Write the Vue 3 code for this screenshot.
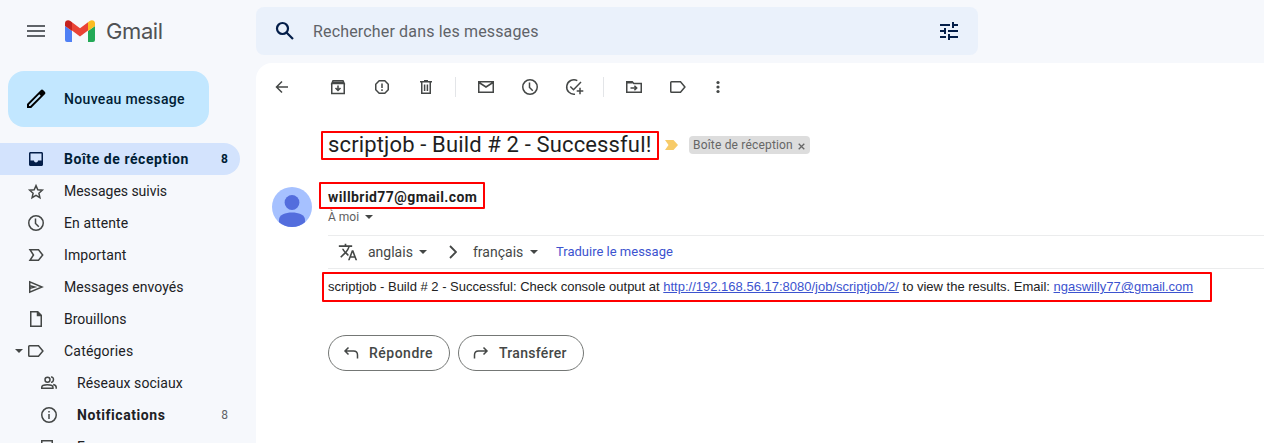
<script setup>
const icons = {
  inbox: 'M4.5 3h11c.9 0 1.5.6 1.5 1.5v11c0 .9-.6 1.5-1.5 1.5h-11c-.9 0-1.5-.6-1.5-1.5v-11C3 3.600 3.600 3 4.500 3zM4.500 4.500v7H8c0 1.100.9 2 2 2s2-.9 2-2h3.500v-7z',
  star: 'M10 4.600l1.800 4.200 4.500.4-3.400 3 1 4.400-3.900-2.300-3.900 2.300 1-4.400-3.400-3 4.500-.4z',
  clock: 'M10 2.750a7.250 7.250 0 1 0 0 14.500a7.250 7.250 0 1 0 0-14.500zM9.500 5.500v5l3.300 3.300',
  important: 'M4 4.750h8.500L16.700 10l-4.200 5.250H4L7.500 10z',
  send: 'M3.750 4.800v10.400L16 10zM4 8.800l4.500 1.200L4 11.200',
  draft: 'M4.750 2.750h7l3.500 3.500v11H4.750zM11.500 3v3.500H15M12.500 3.500v2.300h2.300',
  tag: 'M3.500 4.750h9L16.900 10l-4.400 5.250h-9c-.4 0-.75-.3-.75-.75V5.500c0-.4.3-.75.75-.75z',
  people: 'M8.500 4.250a2.500 2.500 0 1 0 0 5a2.500 2.500 0 1 0 0-5zM2.750 15.250v-1c0-3.300 11.200-3.300 11.200 0v1zM12 3.900c3.300-.3 3.300 5.600 0 5.400M14.200 11.500c2 .5 3 1.300 3 2.700v1.600',
  info: 'M10 2.750a7.250 7.250 0 1 0 0 14.500a7.250 7.250 0 1 0 0-14.500zM10 9v5M10 6v1.500',
  forum: 'M2.750 16V3.750h10.500V12M5 12h8',
}
const items = [
  { t: 'Boîte de réception', i: 'inbox', n: '8', c: 'active bold', k: 'w-inbox' },
  { t: 'Messages suivis', i: 'star', k: 'w-star' },
  { t: 'En attente', i: 'clock', k: 'w-wait' },
  { t: 'Important', i: 'important', k: 'w-imp' },
  { t: 'Messages envoyés', i: 'send', k: 'w-sent' },
  { t: 'Brouillons', i: 'draft', k: 'w-draft' },
  { t: 'Catégories', i: 'tag', c: 'category', k: 'w-cat' },
  { t: 'Réseaux sociaux', i: 'people', c: 'sub', k: 'w-social' },
  { t: 'Notifications', i: 'info', n: '8', c: 'sub bold', k: 'w-notif' },
  { t: 'Forums', i: 'forum', c: 'sub', k: 'w-forum' },
]
</script>

<template>
  <div class="page">
    <aside class="side">
      <div class="brand">
        <svg class="menu" viewBox="0 0 24 24"><path d="M3 6h18v2H3zM3 11h18v2H3zM3 16h18v2H3z" /></svg>
        <svg class="logo" viewBox="0 0 30 22">
          <path fill="#4f80f5" d="M0 6l7 5v11H2a2 2 0 0 1-2-2z" />
          <path fill="#23a957" d="M30 6l-7 5v11h5a2 2 0 0 0 2-2z" />
          <path fill="#ea4335" d="M7 2.200l8 6 8-6v8.300l-8 6-8-6z" />
          <path fill="#fbbc22" d="M23 2.200l1.600-1.200C27-.8 30 .5 30 3.200V6l-7 5z" />
          <path fill="#c5221f" d="M7 2.200L5.400 1C3-.8 0 .5 0 3.200V6l7 5z" />
        </svg>
        <span class="brand-name">Gmail</span>
      </div>
      <button class="compose">
        <svg viewBox="0 0 24 24"><path fill-rule="evenodd" d="M3 16.900L15.700 4.200l1-1c.8-.8 1.800-.8 2.600 0l1.500 1.500c.8.8.8 1.800 0 2.600L7.200 21H3zM5 17.800V19h1.300L16.700 8.700 15.300 7.300z" /></svg>
        <span>Nouveau message</span>
      </button>
      <nav>
        <div v-for="it in items" :key="it.t" class="row" :class="it.c">
          <svg v-if="it.i === 'tag'" class="caret" viewBox="0 0 8 4"><path d="M0 0h8L4 4z" /></svg>
          <svg class="ico" :class="it.i" viewBox="0 0 20 20"><path :d="icons[it.i]" /></svg>
          <span class="name" :class="it.k">{{ it.t }}</span>
          <span v-if="it.n" class="count">{{ it.n }}</span>
        </div>
      </nav>
    </aside>

    <div class="content">
      <div class="search">
        <svg class="glass" viewBox="0 0 24 24"><circle cx="9.500" cy="9.500" r="5.500" /><path d="M13.500 13.500l6.500 6.500" /></svg>
        <span class="placeholder">Rechercher dans les messages</span>
        <svg class="tune" viewBox="0 0 24 24"><path d="M3 17v2h6v-2H3zM3 5v2h10V5H3zm10 16v-2h8v-2h-8v-2h-2v6h2zM7 9v2H3v2h4v2h2V9H7zm14 4v-2H11v2h10zm-6-4h2V7h4V5h-4V3h-2v6z" /></svg>
      </div>

      <main>
        <div class="toolbar">
          <svg class="ico back" viewBox="0 0 20 20"><path d="M16 10H4.800M10 4.500L4.500 10l5.500 5.500" /></svg>
          <svg class="ico" viewBox="0 0 20 20"><path d="M3.750 6.500v10h12.500v-10M3.750 6.500L5 3.750h10l1.250 2.750zM4 5.500h12M10 8.500v4.500M7.500 11l2.500 2.500 2.500-2.500" /></svg>
          <svg class="ico" viewBox="0 0 20 20"><path d="M7.200 3.750h5.600l3.450 3.450v5.600l-3.450 3.450H7.200L3.750 12.800V7.200zM10 6.500v4.500M10 12.300v1.600" /></svg>
          <svg class="ico" viewBox="0 0 20 20"><path d="M4 4.750h12M8 3.750h4M5.750 5v11.250h8.500V5M8.600 7.500v6.500M11.400 7.500v6.500" /></svg>
          <i class="sep"></i>
          <svg class="ico" viewBox="0 0 20 20"><path d="M2.750 4.750h14.500v10.500H2.750zM3 5.500l7 4.500 7-4.500" /></svg>
          <svg class="ico" viewBox="0 0 20 20"><path :d="icons.clock" /></svg>
          <svg class="ico plus" viewBox="0 0 20 20"><path d="M13.300 3.600A7.250 7.250 0 1 0 11 17.200M6.300 9.500l3.200 3.200 7.500-7.700M16 10.700v6.600M12.700 14h6.600" /></svg>
          <i class="sep"></i>
          <svg class="ico" viewBox="0 0 20 20"><path d="M2.750 4.750h5.500L9.800 6.500h7.450v8.750H2.750zM3 5.700h5.500M6.500 11h6M10.400 8.700l2.300 2.300-2.300 2.300" /></svg>
          <svg class="ico" viewBox="0 0 20 20"><path :d="icons.tag" /></svg>
          <svg class="ico more" viewBox="0 0 20 20"><circle cx="10" cy="5.500" r="1.600" /><circle cx="10" cy="10" r="1.600" /><circle cx="10" cy="14.500" r="1.600" /></svg>
        </div>

        <div class="subject">
          <h1>scriptjob - Build # 2 - Successful!</h1>
          <svg class="marker" viewBox="0 0 13 10"><path d="M0 0h8.500L13 5l-4.500 5H0l3.500-5z" /></svg>
          <span class="chip"><span class="chip-name">Boîte de réception</span><svg viewBox="0 0 7 7"><path d="M.7.7l5.600 5.600M6.300.7L.7 6.300" /></svg></span>
          <i class="frame frame-subject"></i>
        </div>

        <div class="sender">
          <svg class="avatar" viewBox="0 0 40 40"><circle cx="20" cy="20" r="20" fill="#a6c1ff" /><circle cx="20" cy="15.500" r="7.400" fill="#536ddd" /><path fill="#536ddd" d="M7 35.200v-2.700C7 23 33 23 33 32.500v2.700A20 20 0 0 1 7 35.200z" /></svg>
          <div class="who">
            <div class="mail">willbrid77@gmail.com</div>
            <div class="to"><span>À moi</span><svg class="caret" viewBox="0 0 8 4"><path d="M0 0h8L4 4z" /></svg></div>
          </div>
          <i class="frame frame-sender"></i>
        </div>

        <div class="translate">
          <svg class="lang-icon" viewBox="0 0 24 24"><path d="M12.870 15.070l-2.540-2.510.030-.030A17.520 17.520 0 0 0 14.070 6H17V4h-7V2H8v2H1v2h11.170C11.500 7.920 10.440 9.750 9 11.350 8.070 10.320 7.300 9.190 6.690 8h-2c.73 1.630 1.730 3.170 2.980 4.560l-5.090 5.020L4 19l5-5 3.110 3.110zM18.500 10h-2L12 22h2l1.120-3h4.750L21 22h2zm-2.620 7l1.620-4.330L19.120 17z" /></svg>
          <span class="from">anglais</span><svg class="caret" viewBox="0 0 8 4"><path d="M0 0h8L4 4z" /></svg>
          <svg class="arrow" viewBox="0 0 8 14"><path d="M1 1l6 6-6 6" /></svg>
          <span class="into">français</span><svg class="caret" viewBox="0 0 8 4"><path d="M0 0h8L4 4z" /></svg>
          <a class="go">Traduire le message</a>
        </div>

        <p class="body">scriptjob - Build # 2 - Successful: Check console output at <a>http://192.168.56.17:8080/job/scriptjob/2/</a> to view the results. Email: <a>ngaswilly77@gmail.com</a><i class="frame frame-body"></i></p>

        <div class="actions">
          <button class="reply"><svg viewBox="0 0 20 20"><path d="M7.500 4.500L4 8l3.500 3.500M4.200 8h8.300c2.500 0 4 1.500 4 4v3.500" /></svg><span>Répondre</span></button>
          <button class="forward"><svg viewBox="0 0 20 20"><path d="M12.500 4.500L16 8l-3.500 3.500M15.800 8H7.500c-2.500 0-4 1.500-4 4v3.500" /></svg><span>Transférer</span></button>
        </div>
      </main>
    </div>
  </div>
</template>

<style>
body { margin: 0; overflow: hidden; }
</style>

<style scoped>
* { box-sizing: border-box; }
.page { width: 1264px; height: 443px; display: flex; overflow: hidden; background: #f6f8fc; font-family: Roboto, sans-serif; font-size: 14px; color: #202124; white-space: nowrap; }
svg { display: block; flex: none; }
button { font: inherit; margin: 0; padding: 0; }
.side { width: 256px; height: 443px; overflow: hidden; flex: none; }
.brand { height: 62px; padding-left: 24px; display: flex; align-items: center; }
.menu { width: 24px; height: 24px; fill: #5f6368; }
.logo { width: 30px; height: 22px; margin-left: 17px; }
.brand-name { margin-left: 11px; font-family: Inter, sans-serif; font-size: 22px; line-height: 30px; letter-spacing: -.4px; color: #505254; }
.compose { width: 201px; height: 56px; margin: 9px 0 0 8px; padding-left: 16px; display: flex; align-items: center; border: 0; border-radius: 16px; background: #c2e7ff; color: #001d35; font-weight: 500; letter-spacing: .33px; }
.compose svg { width: 24px; height: 24px; margin-right: 16px; }
nav { margin-top: 16px; }
.row { height: 32px; width: 240px; padding: 0 12px 0 26px; display: flex; align-items: center; border-radius: 0 16px 16px 0; line-height: 20px; }
.active { background: #d3e3fd; color: #001d35; }
.bold { font-weight: 700; }
.category { padding-left: 15px; }
.category .caret { margin-right: 3px; }
.sub { padding-left: 39px; }
.ico { width: 20px; height: 20px; fill: none; stroke: #444746; stroke-width: 1.5; }
.ico.inbox { fill: #041e49; fill-rule: evenodd; stroke: none; }
.name { margin-left: 18px; flex: 1; letter-spacing: .2px; }
.w-inbox { letter-spacing: .56px; }
.w-star { letter-spacing: -.03px; }
.w-wait { letter-spacing: .12px; }
.w-imp { letter-spacing: .1px; }
.w-sent { letter-spacing: .06px; }
.w-draft { letter-spacing: .02px; }
.w-social { letter-spacing: .08px; }
.w-notif { letter-spacing: .57px; }
.count { font-size: 12px; letter-spacing: 0; }
.sub .count { font-weight: 400; color: #5f6368; }
.caret { width: 8px; height: 4px; fill: #444746; }
.content { flex: 1; min-width: 0; padding-top: 7px; }
.search { width: 722px; height: 48px; padding: 0 17px; display: flex; align-items: center; border-radius: 8px; background: #eaf1fb; }
.glass { width: 24px; height: 24px; fill: none; stroke: #041e49; stroke-width: 2.2; }
.placeholder { flex: 1; margin-left: 16px; font-size: 16px; letter-spacing: .16px; color: #5f6368; }
.tune { width: 24px; height: 24px; fill: #041e49; }
main { height: 380px; margin-top: 8px; background: #fff; border-radius: 16px 0 0 0; }
.toolbar { height: 48px; padding-left: 16px; display: flex; align-items: center; gap: 24px; }
.back { margin-right: 12px; }
.plus { overflow: visible; }
.sep { width: 1px; height: 20px; background: #e3e5e8; margin: 0 -4px 0 -5px; }
.more { fill: #444746; stroke: none; margin-left: -4px; }
.subject { position: relative; height: 36px; margin-top: 16px; padding-left: 72px; display: flex; align-items: center; }
h1 { width: 337px; margin: 0; font-size: 22px; line-height: 28px; font-weight: 400; letter-spacing: .14px; color: #1f1f1f; }
.marker { width: 13px; height: 10px; fill: #f7cb69; }
.chip { width: 121px; height: 18px; margin-left: 11px; padding-left: 4px; display: flex; align-items: center; background: #ddd; border-radius: 4px; font-size: 12px; color: #666; }
.chip-name { width: 105px; letter-spacing: .18px; }
.chip svg { width: 7px; height: 7px; margin-top: 2px; fill: none; stroke: #666; stroke-width: 1.3; }
.frame { position: absolute; border: 2px solid #f00; border-radius: 1px; }
.frame-subject { left: 65px; top: 4px; width: 338px; height: 29px; }
.sender { position: relative; height: 72px; padding: 24px 0 0 16px; display: flex; align-items: flex-start; }
.avatar { width: 40px; height: 40px; }
.who { margin-left: 16px; }
.mail { font-size: 14px; line-height: 20px; font-weight: 700; letter-spacing: .42px; color: #1f1f1f; }
.to { display: flex; align-items: center; gap: 6px; font-size: 12px; line-height: 20px; color: #5e5e5e; }
.frame-sender { left: 63px; top: 19px; width: 166px; height: 27px; }
.translate { height: 34px; margin-left: 72px; padding-left: 10px; display: flex; align-items: center; border-top: 1px solid #ebeced; border-bottom: 1px solid #ebeced; color: #444746; }
.lang-icon { width: 20px; height: 20px; fill: #444746; }
.from { width: 51px; margin-left: 10px; }
.arrow { width: 8px; height: 14px; margin: 0 16px 0 22px; fill: none; stroke: #444746; stroke-width: 1.8; }
.into { width: 57px; }
.go { margin-left: 18px; font-size: 13px; margin-top: -1px; color: #3c53cf; }
.body { position: relative; height: 32px; margin: 3px 0 0; padding: 4px 0 0 72px; font-family: "Liberation Sans", Arial, sans-serif; font-size: 13px; line-height: 22px; color: #222; }
.body a { color: #3c53cf; text-decoration: underline; }
.frame-body { left: 66px; top: 0; width: 890px; height: 30px; }
.actions { margin: 31px 0 0 72px; display: flex; gap: 8px; }
.actions button { height: 36px; padding-left: 12px; display: flex; align-items: center; border: 1px solid #747775; border-radius: 18px; background: #fff; color: #444746; font-weight: 500; }
.actions svg { width: 20px; height: 20px; margin-right: 8px; fill: none; stroke: #444746; stroke-width: 1.5; }
.reply { width: 122px; letter-spacing: .5px; }
.forward { width: 126px; letter-spacing: .3px; }
</style>
